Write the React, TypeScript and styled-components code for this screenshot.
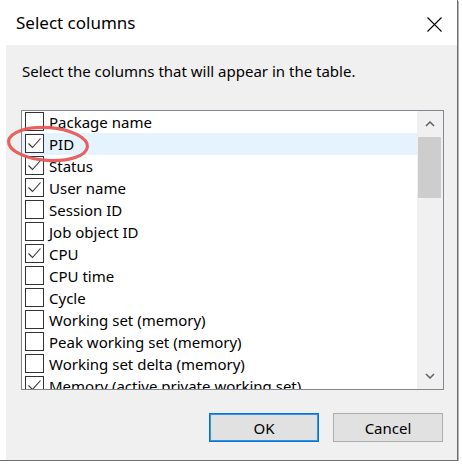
import React from "react";
import styled, { createGlobalStyle } from "styled-components";

const GlobalStyle = createGlobalStyle`
  html, body {
    margin: 0;
    padding: 0;
    background: #ffffff;
  }
  body {
    font-family: "Noto Sans", "Open Sans", sans-serif;
    color: #000;
  }
  * { box-sizing: border-box; }
`;

const Window = styled.div`
  position: relative;
  width: 458px;
  height: 461px;
  display: flex;
  flex-direction: column;
  border-right: 1px solid #6f6f6f;
  border-bottom: 1px solid #6f6f6f;
  box-shadow: 1px 1px 0 #b4b4b4;
  background: #ffffff;
`;

const TitleBar = styled.div`
  height: 45px;
  flex: 0 0 45px;
  display: flex;
  align-items: center;
  justify-content: space-between;
  padding: 0 15px 0 16px;
  background: #ffffff;
`;

const Title = styled.div`
  font-size: 17px;
  line-height: 24px;
  margin-top: 1px;
`;

const CloseButton = styled.div`
  width: 16px;
  height: 16px;
  display: flex;
  align-items: center;
  justify-content: center;
  margin-top: 3px;
`;

const Body = styled.div`
  flex: 1;
  margin-left: 6px;
  background: #f0f0f0;
  display: flex;
  flex-direction: column;
  padding: 15px 13px 0 15px;
`;

const Instruction = styled.div`
  font-size: 15px;
  line-height: 22px;
  padding-left: 1px;
`;

const ListBox = styled.div`
  margin-top: 28px;
  height: 280px;
  border: 1px solid #828790;
  background: #ffffff;
  display: flex;
  overflow: hidden;
`;

const List = styled.div`
  flex: 1;
  display: flex;
  flex-direction: column;
  overflow: hidden;
`;

const Row = styled.div<{ $selected?: boolean }>`
  flex: 0 0 22px;
  height: 22px;
  display: flex;
  align-items: flex-start;
  padding-left: 3px;
  background: ${(p) => (p.$selected ? "#e5f3ff" : "transparent")};
`;

const CheckBox = styled.div`
  width: 19px;
  height: 19px;
  flex: 0 0 19px;
  margin-top: 1px;
  border: 1px solid #333333;
  background: #ffffff;
  display: flex;
  align-items: center;
  justify-content: center;
`;

const Label = styled.span`
  font-size: 15px;
  line-height: 22px;
  margin-left: 5px;
  white-space: nowrap;
`;

const ScrollBar = styled.div`
  width: 26px;
  flex: 0 0 26px;
  background: #f0f0f0;
  display: flex;
  flex-direction: column;
`;

const ScrollArrow = styled.div`
  height: 26px;
  flex: 0 0 26px;
  display: flex;
  align-items: center;
  justify-content: center;
`;

const ScrollTrack = styled.div`
  flex: 1;
  display: flex;
  flex-direction: column;
  padding: 0 2px 0 1px;
`;

const Thumb = styled.div`
  height: 61px;
  background: #cdcdcd;
`;

const ButtonRow = styled.div`
  margin-top: 23px;
  display: flex;
  justify-content: flex-end;
  gap: 14px;
  padding-right: 1px;
`;

const Button = styled.div<{ $default?: boolean }>`
  width: 110px;
  height: 29px;
  display: flex;
  align-items: center;
  justify-content: center;
  font-size: 15px;
  background: #e1e1e1;
  border: 1px solid ${(p) => (p.$default ? "#0078d7" : "#adadad")};
  box-shadow: ${(p) => (p.$default ? "inset 0 0 0 1px #3c8fdc" : "none")};
`;

const Annotation = styled.svg`
  position: absolute;
  left: 0;
  top: 115px;
  pointer-events: none;
`;

const items: { label: string; checked: boolean; selected?: boolean }[] = [
  { label: "Package name", checked: false },
  { label: "PID", checked: true, selected: true },
  { label: "Status", checked: true },
  { label: "User name", checked: true },
  { label: "Session ID", checked: false },
  { label: "Job object ID", checked: false },
  { label: "CPU", checked: true },
  { label: "CPU time", checked: false },
  { label: "Cycle", checked: false },
  { label: "Working set (memory)", checked: false },
  { label: "Peak working set (memory)", checked: false },
  { label: "Working set delta (memory)", checked: false },
  { label: "Memory (active private working set)", checked: true },
];

const Check = () => (
  <svg width="17" height="17" viewBox="0 0 17 17">
    <polyline points="2.5,8.5 6.5,12.5 14.5,3.5" fill="none" stroke="#333" strokeWidth="1.1" />
  </svg>
);

const Chevron = ({ up }: { up?: boolean }) => (
  <svg width="10" height="6" viewBox="0 0 10 6">
    <polyline
      points={up ? "1,5 5,1 9,5" : "1,1 5,5 9,1"}
      fill="none"
      stroke="#606060"
      strokeWidth="1.5"
    />
  </svg>
);

export default function App() {
  return (
    <>
      <GlobalStyle />
      <Window>
        <TitleBar>
          <Title>Select columns</Title>
          <CloseButton>
            <svg width="15" height="15" viewBox="0 0 15 15">
              <path d="M0.5 0.5 L14.5 14.5 M14.5 0.5 L0.5 14.5" stroke="#000" strokeWidth="1.1" />
            </svg>
          </CloseButton>
        </TitleBar>
        <Body>
          <Instruction>Select the columns that will appear in the table.</Instruction>
          <ListBox>
            <List>
              {items.map((it) => (
                <Row key={it.label} $selected={it.selected}>
                  <CheckBox>{it.checked && <Check />}</CheckBox>
                  <Label>{it.label}</Label>
                </Row>
              ))}
            </List>
            <ScrollBar>
              <ScrollArrow>
                <Chevron up />
              </ScrollArrow>
              <ScrollTrack>
                <Thumb />
              </ScrollTrack>
              <ScrollArrow>
                <Chevron />
              </ScrollArrow>
            </ScrollBar>
          </ListBox>
          <ButtonRow>
            <Button $default>OK</Button>
            <Button>Cancel</Button>
          </ButtonRow>
        </Body>
        <Annotation width="100" height="55" viewBox="0 115 100 55">
          <ellipse
            cx="48"
            cy="144"
            rx="39.5"
            ry="16.5"
            transform="rotate(4 48 144)"
            fill="none"
            stroke="#e8514f"
            strokeWidth="3.2"
            strokeOpacity="0.9"
          />
        </Annotation>
      </Window>
    </>
  );
}
